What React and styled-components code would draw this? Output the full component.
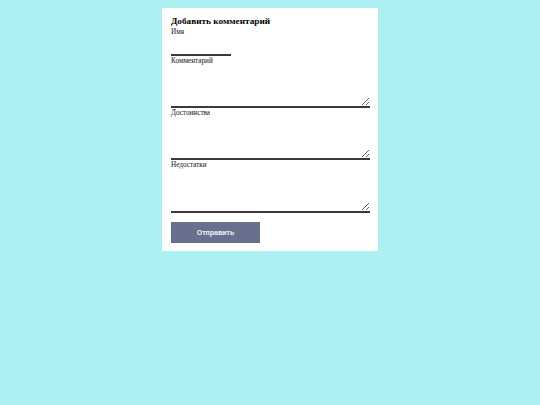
import styled, { createGlobalStyle } from "styled-components";

const GlobalStyle = createGlobalStyle`
  html, body {
    background-color: #acf0f4;
  }
  body {
    margin: 8px;
    font-family: "Liberation Serif", "Times New Roman", serif;
  }
`;

const Card = styled.form`
  width: 216px;
  margin: 0 auto;
  box-sizing: border-box;
  background-color: #fff;
  padding: 8px 8px 8px 9px;
  display: flex;
  flex-direction: column;
  align-items: flex-start;
`;

const Title = styled.h3`
  margin: 0;
  font-size: 9.25px;
  line-height: 11px;
  font-weight: 700;
  color: #000;
`;

const Label = styled.label`
  display: block;
  padding-top: 1px;
  font-size: 7.2px;
  line-height: 9px;
  color: #111;
`;

const NameInput = styled.input`
  display: block;
  box-sizing: border-box;
  width: 60px;
  height: 19px;
  padding: 0 2px;
  border: none;
  border-bottom: 2px solid #3a3a3a;
  outline: none;
  background: #fff;
  font-size: 8px;
`;

const TextArea = styled.textarea`
  display: block;
  box-sizing: border-box;
  width: 199px;
  height: ${(props) => props.$h || 42}px;
  padding: 2px;
  border: none;
  border-bottom: 2px solid #3a3a3a;
  outline: none;
  background: #fff;
  font-size: 8px;
`;

const Button = styled.button`
  margin-top: 9px;
  width: 89px;
  height: 21px;
  border: none;
  background-color: #67718f;
  color: #f2f3f6;
  font-family: "Liberation Sans", Arial, sans-serif;
  font-size: 7px;
  font-weight: 700;
  cursor: pointer;
`;

export default function App() {
  return (
    <>
      <GlobalStyle />
      <Card onSubmit={(e) => e.preventDefault()}>
        <Title>Добавить комментарий</Title>
        <Label htmlFor="name">Имя</Label>
        <NameInput id="name" type="text" />
        <Label htmlFor="comment">Комментарий</Label>
        <TextArea id="comment" $h={42} />
        <Label htmlFor="pros">Достоинства</Label>
        <TextArea id="pros" $h={42} />
        <Label htmlFor="cons">Недостатки</Label>
        <TextArea id="cons" $h={43} />
        <Button type="submit">Отправить</Button>
      </Card>
    </>
  );
}
